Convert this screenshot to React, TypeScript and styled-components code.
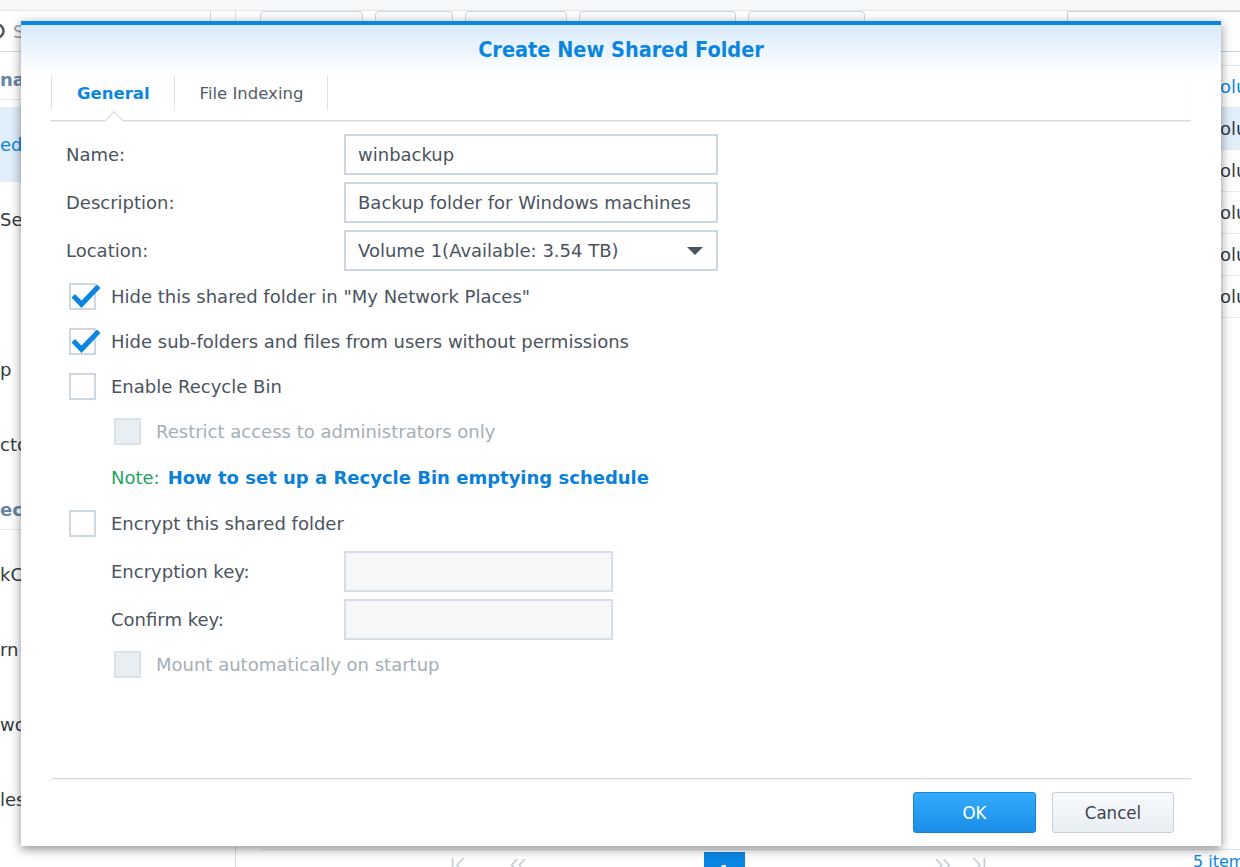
import React from 'react';
import styled, { createGlobalStyle } from 'styled-components';
import { ChevronFirst, ChevronLast, ChevronsLeft, ChevronsRight } from 'lucide-react';

const GlobalStyle = createGlobalStyle`
  html, body {
    margin: 0;
    padding: 0;
    background: #ffffff;
  }
  body {
    font-family: "DejaVu Sans", Verdana, sans-serif;
  }
  * {
    box-sizing: border-box;
  }
`;

const Page = styled.div`
  position: relative;
  width: 1240px;
  height: 867px;
  overflow: hidden;
  background: #fff;
  font-size: 18px;
  color: #333a41;
`;

const TopStrip = styled.div`
  height: 11px;
  background: #f5f7f9;
  border-bottom: 1px solid #dfe5ea;
`;

const Desktop = styled.div`
  display: grid;
  grid-template-columns: 236px 1fr;
  height: 856px;
`;

/* ---------- background window: sidebar ---------- */

const Sidebar = styled.aside`
  border-right: 1px solid #d8dfe5;
  overflow: hidden;
  white-space: nowrap;
`;

const SideSearch = styled.div`
  display: flex;
  align-items: center;
  gap: 7px;
  height: 41px;
  width: 231px;
  margin-left: -20px;
  padding-left: 8px;
  border: 1px solid #cfd8e0;
  border-top: none;
  color: #9aa3ab;
`;

const SideHeading = styled.div`
  height: 48px;
  padding-top: 17px;
  font-weight: bold;
  color: #6788a6;
  border-bottom: 1px solid #e3e8ec;
  margin-bottom: 7px;
`;

const SideItem = styled.div<{ $active?: boolean }>`
  height: 75px;
  display: flex;
  align-items: center;
  background: ${p => (p.$active ? '#e1eefb' : 'transparent')};
  color: ${p => (p.$active ? '#0a86e2' : '#333a41')};
`;

/* ---------- background window: main ---------- */

const Main = styled.section`
  display: flex;
  flex-direction: column;
  overflow: hidden;
`;

const Toolbar = styled.div`
  display: flex;
  gap: 12px;
  height: 41px;
  padding-left: 24px;
`;

const ToolButton = styled.div<{ $w: number }>`
  width: ${p => p.$w}px;
  height: 41px;
  border: 1px solid #cdd5dd;
  border-radius: 4px 4px 0 0;
  background: linear-gradient(#fbfcfd, #eff3f6);
`;

const ToolSearch = styled.div`
  margin-left: auto;
  width: 173px;
  height: 41px;
  padding: 9px 0 0 15px;
  border: 1px solid #c8d0d8;
  border-right: none;
`;

const Table = styled.div`
  flex: 1;
  margin-top: 13px;
  border-top: 1px solid #e0e5ea;
`;

const TableRow = styled.div<{ $active?: boolean; $head?: boolean }>`
  height: 42px;
  display: flex;
  justify-content: flex-end;
  align-items: center;
  border-bottom: 1px solid #e5e9ed;
  background: ${p => (p.$active ? '#e1eefb' : 'transparent')};
  color: ${p => (p.$head ? '#0a86e2' : '#333a41')};
`;

const LocationCell = styled.div`
  width: 31px;
  overflow: hidden;
  white-space: nowrap;
`;

const Pager = styled.div`
  height: 18px;
  margin-left: 24px;
  border-top: 1px solid #dfe4e9;
  display: flex;
  align-items: flex-start;
  padding: 2px 0 0 185px;
  color: #c3cdd7;
  white-space: nowrap;
  overflow: hidden;
`;

const PagerGap = styled.span<{ $w: number }>`
  flex: none;
  width: ${p => p.$w}px;
`;

const PageBox = styled.div`
  flex: none;
  width: 41px;
  height: 41px;
  background: #0a86e2;
  color: #fff;
  text-align: center;
  padding-top: 10px;
  font-size: 16px;
`;

const ItemCount = styled.span`
  margin-left: auto;
  width: 47px;
  color: #0a86e2;
  font-size: 16px;
  overflow: hidden;
`;

/* ---------- dialog ---------- */

const Dialog = styled.div`
  position: absolute;
  left: 21px;
  top: 21px;
  width: 1200px;
  height: 825px;
  display: flex;
  flex-direction: column;
  background: #fff;
  border-top: 4px solid #0786e4;
  box-shadow: 0 3px 10px rgba(0, 0, 0, 0.45);
`;

const DialogHeader = styled.header`
  height: 48px;
  display: flex;
  align-items: center;
  justify-content: center;
  background: linear-gradient(#d8eafb, #ffffff);
`;

const DialogTitle = styled.h1`
  margin: 0;
  font-family: "DejaVu Sans Condensed", "DejaVu Sans", sans-serif;
  font-stretch: condensed;
  font-size: 21.5px;
  font-weight: bold;
  color: #0b86e0;
`;

const TabBar = styled.nav`
  height: 48px;
  margin: 0 30px;
  padding-top: 2px;
  display: flex;
  align-items: flex-start;
  border-bottom: 1px solid #d5dadf;
  box-shadow: 0 1px 1px rgba(0, 0, 0, 0.05);
`;

const Tab = styled.div<{ $active?: boolean }>`
  position: relative;
  height: 35px;
  padding: 1px 24px 0 25px;
  display: flex;
  align-items: center;
  font-size: 16.5px;
  font-weight: ${p => (p.$active ? 'bold' : 'normal')};
  color: ${p => (p.$active ? '#0a86e2' : '#525c66')};
  border-right: 1px solid #dde3e8;

  &:first-child {
    border-left: 1px solid #dde3e8;
  }

  ${p =>
    p.$active &&
    `
    &::after {
      content: '';
      position: absolute;
      left: 50%;
      top: 39px;
      width: 13px;
      height: 13px;
      margin-left: -6px;
      background: #fff;
      border-top: 1px solid #d5dadf;
      border-left: 1px solid #d5dadf;
      transform: rotate(45deg);
    }
  `}
`;

const Body = styled.div`
  flex: 1;
  padding: 13px 45px 0;
  color: #4a545e;
`;

const FieldGrid = styled.div<{ $label: number; $input: number; $indent?: number }>`
  display: grid;
  grid-template-columns: ${p => p.$label}px ${p => p.$input}px;
  grid-auto-rows: 41px;
  row-gap: 7px;
  align-items: center;
  padding-left: ${p => p.$indent ?? 0}px;
`;

const Label = styled.label`
  white-space: nowrap;
`;

const TextBox = styled.div<{ $disabled?: boolean }>`
  height: 41px;
  display: flex;
  align-items: center;
  padding: 0 12px;
  border: 2px solid ${p => (p.$disabled ? '#d6dde4' : '#cdd6df')};
  background: ${p => (p.$disabled ? '#f5f7f9' : '#fff')};
  color: #4a545e;
  white-space: nowrap;
`;

const Caret = styled.svg`
  margin-left: auto;
  margin-right: 1px;
`;

const Options = styled.div`
  margin-top: 3px;
`;

const CheckRow = styled.div<{ $indent?: boolean; $disabled?: boolean }>`
  height: 45px;
  display: flex;
  align-items: center;
  gap: 15px;
  padding-left: ${p => (p.$indent ? 48 : 3)}px;
  color: ${p => (p.$disabled ? '#a6aeb6' : '#4a545e')};
  white-space: nowrap;
`;

const Box = styled.span<{ $disabled?: boolean }>`
  position: relative;
  flex: none;
  width: 27px;
  height: 27px;
  border: 2px solid ${p => (p.$disabled ? '#dbe2e9' : '#cfd8e1')};
  background: ${p => (p.$disabled ? '#e9eef3' : '#fff')};

  svg {
    position: absolute;
    left: -2px;
    top: -2px;
    overflow: visible;
  }
`;

const NoteRow = styled.div`
  height: 47px;
  display: flex;
  align-items: center;
  padding-left: 45px;
  white-space: nowrap;
`;

const NoteLabel = styled.span`
  color: #1da462;
  margin-right: 8px;
`;

const NoteLink = styled.a`
  color: #0a80d8;
  font-weight: bold;
  text-decoration: none;
`;

const KeyFields = styled.div`
  margin-top: 5px;
  margin-bottom: 2px;
`;

const Footer = styled.footer`
  margin: 0 30px;
  padding: 13px 17px 13px 0;
  display: flex;
  justify-content: flex-end;
  gap: 16px;
  border-top: 1px solid #d5dadf;
  box-shadow: inset 0 1px 1px rgba(0, 0, 0, 0.04);
`;

const Button = styled.button<{ $primary?: boolean }>`
  width: ${p => (p.$primary ? 123 : 122)}px;
  height: 41px;
  border-radius: 3px;
  font-family: "DejaVu Sans Condensed", "DejaVu Sans", sans-serif;
  font-stretch: condensed;
  font-size: 18.5px;
  cursor: pointer;
  border: 1px solid ${p => (p.$primary ? '#1781d4' : '#c6d0da')};
  background: ${p =>
    p.$primary ? 'linear-gradient(#34abfd, #1a8de7)' : 'linear-gradient(#f8fafc, #e9eef3)'};
  color: ${p => (p.$primary ? '#ffffff' : '#3d464f')};
`;

function Check() {
  return (
    <svg width="31" height="27" viewBox="0 0 31 27">
      <path
        d="M2.5 14.5 L6 11 L12.5 17.5 L28 1.5 L31.5 5 L12.5 25 Z"
        fill="#0a86e2"
        strokeLinejoin="round"
      />
    </svg>
  );
}

function CheckOption({
  label,
  checked,
  indent,
  disabled,
}: {
  label: string;
  checked?: boolean;
  indent?: boolean;
  disabled?: boolean;
}) {
  return (
    <CheckRow $indent={indent} $disabled={disabled}>
      <Box $disabled={disabled}>{checked && <Check />}</Box>
      {label}
    </CheckRow>
  );
}

function Background() {
  return (
    <>
      <TopStrip />
      <Desktop>
        <Sidebar>
          <SideSearch>
            <svg width="17" height="17" viewBox="0 0 17 17">
              <circle cx="8" cy="8" r="6.5" fill="none" stroke="#4d555c" strokeWidth="2.5" />
            </svg>
            Search
          </SideSearch>
          <SideHeading>nar</SideHeading>
          <SideItem $active>ed</SideItem>
          <SideItem>Se</SideItem>
          <SideItem />
          <SideItem>p</SideItem>
          <SideItem>cto</SideItem>
          <SideHeading>ect</SideHeading>
          <SideItem>kC</SideItem>
          <SideItem>rn</SideItem>
          <SideItem>wor</SideItem>
          <SideItem>les</SideItem>
          <SideItem>it</SideItem>
        </Sidebar>
        <Main>
          <Toolbar>
            <ToolButton $w={103} />
            <ToolButton $w={78} />
            <ToolButton $w={102} />
            <ToolButton $w={157} />
            <ToolButton $w={117} />
            <ToolSearch>
              <svg width="21" height="16" viewBox="0 0 21 16">
                <rect x="0" y="0" width="21" height="3" fill="#555d64" />
                <rect x="0" y="6" width="21" height="3" fill="#555d64" />
                <rect x="0" y="12" width="21" height="3" fill="#555d64" />
              </svg>
            </ToolSearch>
          </Toolbar>
          <Table>
            <TableRow $head>
              <LocationCell>Volume 1</LocationCell>
            </TableRow>
            {[0, 1, 2, 3, 4].map(i => (
              <TableRow key={i} $active={i === 0}>
                <LocationCell>Volume 1</LocationCell>
              </TableRow>
            ))}
          </Table>
          <Pager>
            <ChevronFirst size={26} strokeWidth={1.5} />
            <PagerGap $w={34} />
            <ChevronsLeft size={26} strokeWidth={1.5} />
            <PagerGap $w={173} />
            <PageBox>1</PageBox>
            <PagerGap $w={185} />
            <ChevronsRight size={26} strokeWidth={1.5} />
            <PagerGap $w={10} />
            <ChevronLast size={26} strokeWidth={1.5} />
            <ItemCount>5 item(s)</ItemCount>
          </Pager>
        </Main>
      </Desktop>
    </>
  );
}

export default function App() {
  return (
    <Page>
      <GlobalStyle />
      <Background />
      <Dialog>
        <DialogHeader>
          <DialogTitle>Create New Shared Folder</DialogTitle>
        </DialogHeader>
        <TabBar>
          <Tab $active>General</Tab>
          <Tab>File Indexing</Tab>
        </TabBar>
        <Body>
          <FieldGrid $label={278} $input={374}>
            <Label>Name:</Label>
            <TextBox>winbackup</TextBox>
            <Label>Description:</Label>
            <TextBox>Backup folder for Windows machines</TextBox>
            <Label>Location:</Label>
            <TextBox>
              Volume 1(Available: 3.54 TB)
              <Caret width="16" height="8" viewBox="0 0 16 8">
                <path d="M0 0 H16 L8 8 Z" fill="#4a545e" />
              </Caret>
            </TextBox>
          </FieldGrid>
          <Options>
            <CheckOption checked label={'Hide this shared folder in "My Network Places"'} />
            <CheckOption checked label="Hide sub-folders and files from users without permissions" />
            <CheckOption label="Enable Recycle Bin" />
            <CheckOption indent disabled label="Restrict access to administrators only" />
            <NoteRow>
              <NoteLabel>Note:</NoteLabel>
              <NoteLink>How to set up a Recycle Bin emptying schedule</NoteLink>
            </NoteRow>
            <CheckOption label="Encrypt this shared folder" />
            <KeyFields>
              <FieldGrid $label={233} $input={269} $indent={45}>
                <Label>Encryption key:</Label>
                <TextBox $disabled />
                <Label>Confirm key:</Label>
                <TextBox $disabled />
              </FieldGrid>
            </KeyFields>
            <CheckOption indent disabled label="Mount automatically on startup" />
          </Options>
        </Body>
        <Footer>
          <Button $primary>OK</Button>
          <Button>Cancel</Button>
        </Footer>
      </Dialog>
    </Page>
  );
}
